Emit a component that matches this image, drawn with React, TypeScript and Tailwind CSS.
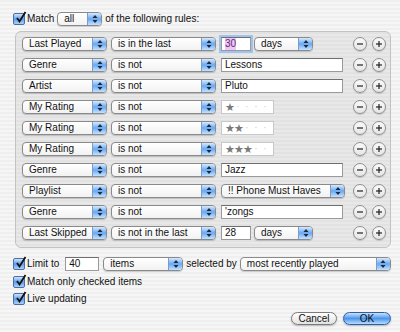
import React from "react";

type Rule = {
  field: string;
  op: string;
  kind: "text" | "stars" | "days" | "popup";
  value?: string;
  stars?: number;
  focus?: boolean;
};

const rules: Rule[] = [
  { field: "Last Played", op: "is in the last", kind: "days", value: "30", focus: true },
  { field: "Genre", op: "is not", kind: "text", value: "Lessons" },
  { field: "Artist", op: "is not", kind: "text", value: "Pluto" },
  { field: "My Rating", op: "is not", kind: "stars", stars: 1 },
  { field: "My Rating", op: "is not", kind: "stars", stars: 2 },
  { field: "My Rating", op: "is not", kind: "stars", stars: 3 },
  { field: "Genre", op: "is not", kind: "text", value: "Jazz" },
  { field: "Playlist", op: "is not", kind: "popup", value: "!! Phone Must Haves" },
  { field: "Genre", op: "is not", kind: "text", value: "'zongs" },
  { field: "Last Skipped", op: "is not in the last", kind: "days", value: "28" },
];

function Arrows() {
  return (
    <svg width="6" height="10" viewBox="0 0 6 10">
      <path d="M3 1 L5.5 4 H0.5 Z" fill="#1a2a40" />
      <path d="M3 9 L5.5 6 H0.5 Z" fill="#1a2a40" />
    </svg>
  );
}

function Popup({ label, className }: { label: string; className: string }) {
  return (
    <div
      className={`flex h-[14px] shrink-0 items-stretch overflow-hidden rounded-[4px] border border-[#8a8a8a] bg-gradient-to-b from-white to-[#f2f2f2] shadow-[0_1px_1px_rgba(0,0,0,0.18)] ${className}`}
    >
      <span className="flex-1 truncate pl-[6px] leading-[12px] text-[#111]">{label}</span>
      <span className="flex w-[14px] items-center justify-center border-l border-[#7c9cc8] bg-gradient-to-b from-[#d6e9fd] via-[#6aa8f0] to-[#c4e2ff]">
        <Arrows />
      </span>
    </div>
  );
}

function Field({ value, className, focus }: { value: string; className: string; focus?: boolean }) {
  return (
    <div
      className={`flex h-[14px] shrink-0 items-center border border-[#9a9a9a] border-t-[#6e6e6e] bg-white pl-[3px] leading-[12px] text-[#111] ${
        focus ? "shadow-[0_0_0_2px_#9fc3ee]" : ""
      } ${className}`}
    >
      {focus ? <span className="bg-[#f0c4f4] text-[#5a2c70]">{value}</span> : value}
    </div>
  );
}

function Stars({ n }: { n: number }) {
  return (
    <div className="flex h-[14px] w-[53px] shrink-0 items-center gap-[1px] border border-[#c8c8c8] bg-white pl-[3px]">
      {[0, 1, 2, 3, 4].map((i) =>
        i < n ? (
          <span key={i} className="w-[8px] text-center text-[11px] leading-none text-[#7a7a7a]">
            ★
          </span>
        ) : (
          <span key={i} className="w-[8px] text-center text-[10px] leading-none text-[#cccccc]">
            ·
          </span>
        )
      )}
    </div>
  );
}

function RoundBtn({ sign }: { sign: "-" | "+" }) {
  return (
    <div className="flex h-[14px] w-[14px] items-center justify-center rounded-full border border-[#8f8f8f] bg-gradient-to-b from-[#fafafa] to-[#e6e6e6] shadow-[0_1px_1px_rgba(0,0,0,0.15)]">
      <svg width="8" height="8" viewBox="0 0 8 8">
        <path d="M1 4 H7" stroke="#222" strokeWidth="1.2" />
        {sign === "+" && <path d="M4 1 V7" stroke="#222" strokeWidth="1.2" />}
      </svg>
    </div>
  );
}

function Check() {
  return (
    <div className="relative h-[12px] w-[12px] shrink-0 rounded-[2px] border border-[#4a6fa8] bg-gradient-to-b from-[#cfe3fb] via-[#5c9ce8] to-[#a9d2fb]">
      <svg className="absolute -top-[3px] left-[1px]" width="12" height="13" viewBox="0 0 12 13">
        <path d="M2 7 L4.5 10.5 L10.5 1" fill="none" stroke="#111" strokeWidth="1.8" />
      </svg>
    </div>
  );
}

function RuleRow({ r }: { r: Rule }) {
  return (
    <div className="flex h-[14px] items-center">
      <Popup label={r.field} className="w-[85px]" />
      <Popup label={r.op} className="ml-[4px] w-[105px]" />
      <div className="ml-[5px] flex w-[124px] items-center">
        {r.kind === "text" && <Field value={r.value!} className="w-[122px]" />}
        {r.kind === "stars" && <Stars n={r.stars!} />}
        {r.kind === "popup" && <Popup label={r.value!} className="w-[124px]" />}
        {r.kind === "days" && (
          <>
            <Field value={r.value!} focus={r.focus} className="w-[30px]" />
            <Popup label="days" className="ml-[3px] w-[59px]" />
          </>
        )}
      </div>
      <div className="ml-auto flex gap-[5px] pr-[4px]">
        <RoundBtn sign="-" />
        <RoundBtn sign="+" />
      </div>
    </div>
  );
}

export default function App() {
  return (
    <div className="h-[332px] w-[400px] overflow-hidden bg-[repeating-linear-gradient(180deg,#efefef_0px,#efefef_2px,#f6f6f6_2px,#f6f6f6_4px)] font-['Liberation_Sans',Arial,sans-serif] text-[10px] leading-[12px] text-[#111]">
      {/* header */}
      <div className="flex items-center pl-[13px] pt-[12px]">
        <Check />
        <span className="ml-[2px]">Match</span>
        <Popup label="all" className="ml-[3px] w-[45px]" />
        <span className="ml-[3px]">of the following rules:</span>
      </div>

      {/* rules panel */}
      <div className="ml-[15px] mt-[5px] flex h-[217px] w-[376px] flex-col gap-[7px] rounded-[6px] border border-[#c2c2c2] bg-[repeating-linear-gradient(180deg,#e2e2e2_0px,#e2e2e2_2px,#e8e8e8_2px,#e8e8e8_4px)] pl-[6px] pt-[5px]">
        {rules.map((r, i) => (
          <RuleRow key={i} r={r} />
        ))}
      </div>

      {/* options */}
      <div className="mt-[9px] flex items-center pl-[13px]">
        <Check />
        <span className="ml-[2px]">Limit to</span>
        <Field value="40" className="ml-[6px] w-[34px]" />
        <Popup label="items" className="ml-[4px] w-[80px]" />
        <span className="ml-[3px]">selected by</span>
        <Popup label="most recently played" className="ml-[3px] w-[151px]" />
      </div>
      <div className="mt-[5px] flex items-center pl-[13px]">
        <Check />
        <span className="ml-[2px]">Match only checked items</span>
      </div>
      <div className="mt-[5px] flex items-center pl-[13px]">
        <Check />
        <span className="ml-[2px]">Live updating</span>
      </div>

      {/* buttons */}
      <div className="mt-[7px] flex justify-end gap-[6px] pr-[9px]">
        <button className="flex h-[13px] w-[46px] items-center justify-center rounded-full border border-[#7a7a7a] bg-gradient-to-b from-white to-[#e2e2e2] leading-none shadow-[0_1px_2px_rgba(0,0,0,0.25)]">
          Cancel
        </button>
        <button className="flex h-[13px] w-[48px] items-center justify-center rounded-full border border-[#2d5fa6] bg-gradient-to-b from-[#c8e2fd] via-[#4c95ea] to-[#b6ddff] leading-none shadow-[0_1px_2px_rgba(0,0,0,0.25)]">
          OK
        </button>
      </div>
    </div>
  );
}
